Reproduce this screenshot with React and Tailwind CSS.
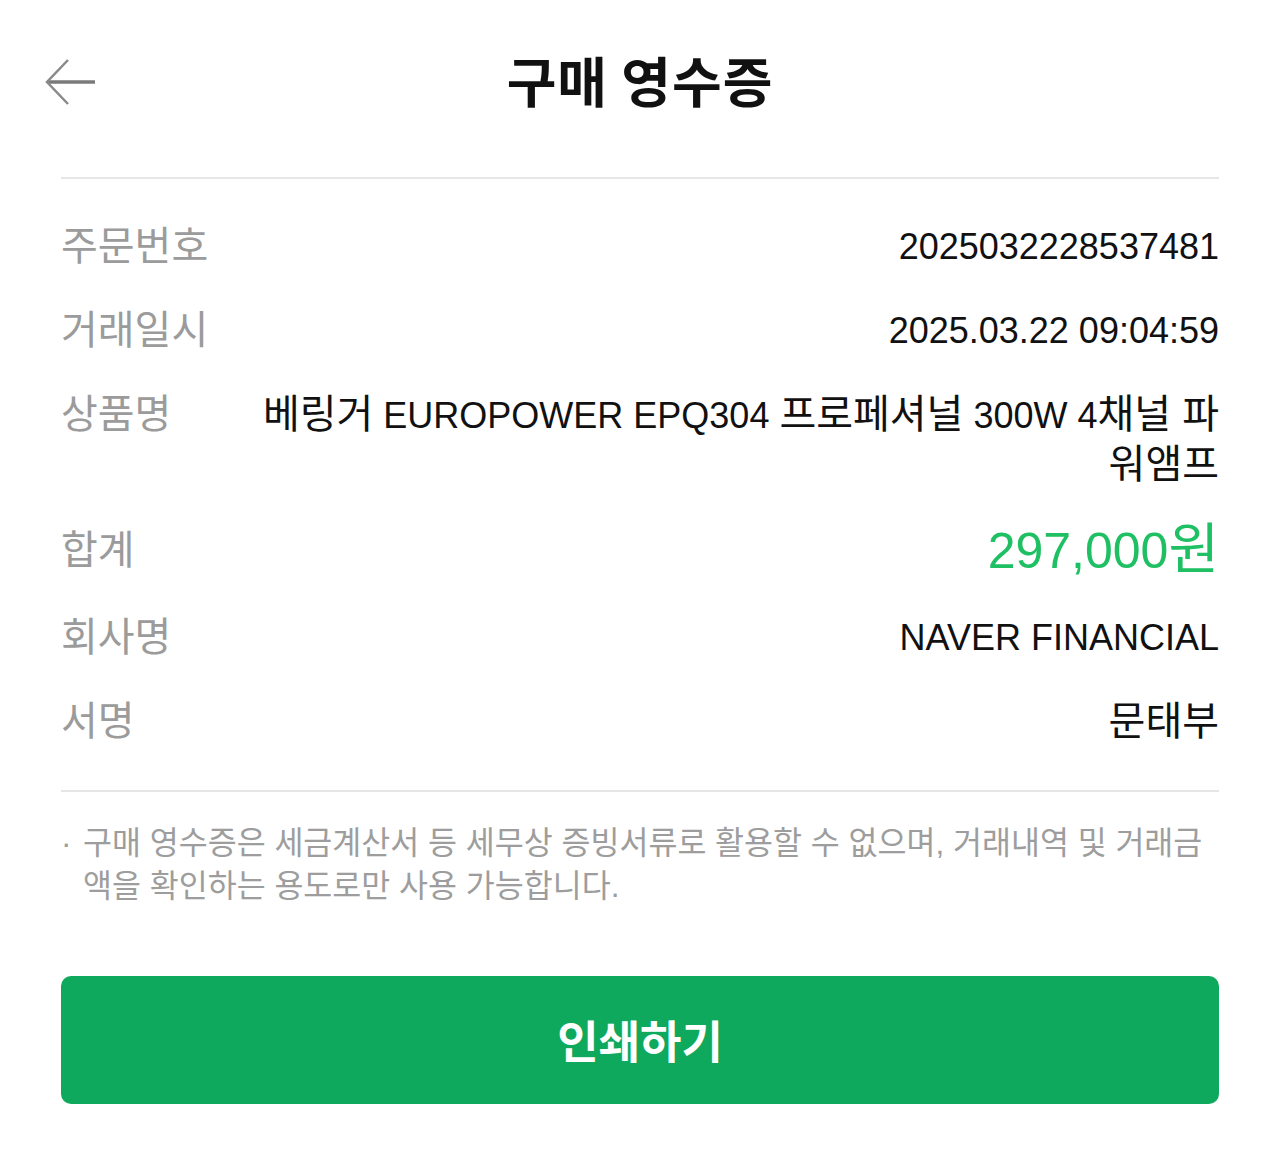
export default function App() {
  const font = { fontFamily: '"Liberation Sans", "Noto Sans CJK KR", sans-serif' };
  const K = ({ children }) => <span className="text-[40px]">{children}</span>;
  return (
    <div className="w-[1280px] h-[1167px] bg-white text-[#111]" style={font}>
      <header className="relative h-[160px] flex items-center justify-center">
        <svg className="absolute left-[44px] top-[58px]" width="54" height="48" viewBox="0 0 54 48" fill="none">
          <path d="M3 24 H51" stroke="#7a7a7a" strokeWidth="3.5" />
          <path d="M24 2 L3 24 L24 46" stroke="#8a8a8a" strokeWidth="2.5" strokeLinejoin="miter" />
        </svg>
        <h1 className="text-[54px] font-bold leading-none tracking-[1px] text-[#111]" style={{ fontFamily: '"Noto Sans CJK KR", sans-serif' }}>
          구매 영수증
        </h1>
      </header>
      <div className="mx-[61px]">
        <div className="h-[2px] bg-[#e6e6e6] mt-[17px]" />
        <div className="flex flex-col gap-[35px] pt-[43px] pb-[44px]">
          <div className="flex justify-between items-center text-[36px] leading-[49px]">
            <span className="text-[#9b9b9b] shrink-0 text-[40px]">주문번호</span>
            <span className="text-right">2025032228537481</span>
          </div>
          <div className="flex justify-between items-center text-[36px] leading-[49px]">
            <span className="text-[#9b9b9b] shrink-0 text-[40px]">거래일시</span>
            <span className="text-right">2025.03.22 09:04:59</span>
          </div>
          <div className="flex justify-between items-start text-[36px] leading-[49px] h-[97px]">
            <span className="text-[#9b9b9b] shrink-0 w-[180px] text-[40px]">상품명</span>
            <span className="text-right flex-1">
              <K>베링거</K> EUROPOWER EPQ304 <K>프로페셔널</K> 300W 4<K>채널 파</K>
              <br />
              <K>워앰프</K>
            </span>
          </div>
          <div className="flex justify-between items-center h-[56px]">
            <span className="text-[#9b9b9b] text-[40px] leading-[49px]">합계</span>
            <span className="text-[#1fc064] text-[50px] leading-[56px]">
              297,000<span className="text-[55px]">원</span>
            </span>
          </div>
          <div className="flex justify-between items-center text-[36px] leading-[49px]">
            <span className="text-[#9b9b9b] text-[40px]">회사명</span>
            <span>NAVER FINANCIAL</span>
          </div>
          <div className="flex justify-between items-center text-[40px] leading-[49px]">
            <span className="text-[#9b9b9b]">서명</span>
            <span>문태부</span>
          </div>
        </div>
        <div className="h-[2px] bg-[#e6e6e6]" />
        <div className="flex mt-[30px] text-[31.5px] leading-[43px] text-[#9d9d9d]">
          <span className="w-[22px] shrink-0">·</span>
          <p className="whitespace-nowrap">
            구매 영수증은 세금계산서 등 세무상 증빙서류로 활용할 수 없으며, 거래내역 및 거래금<br />액을 확인하는 용도로만 사용 가능합니다.
          </p>
        </div>
        <button className="mt-[68px] w-full h-[128px] rounded-[10px] bg-[#0ea95c] text-white text-[45px] font-bold flex items-center justify-center" style={{ fontFamily: '"Noto Sans CJK KR", sans-serif' }}>
          인쇄하기
        </button>
      </div>
    </div>
  );
}
